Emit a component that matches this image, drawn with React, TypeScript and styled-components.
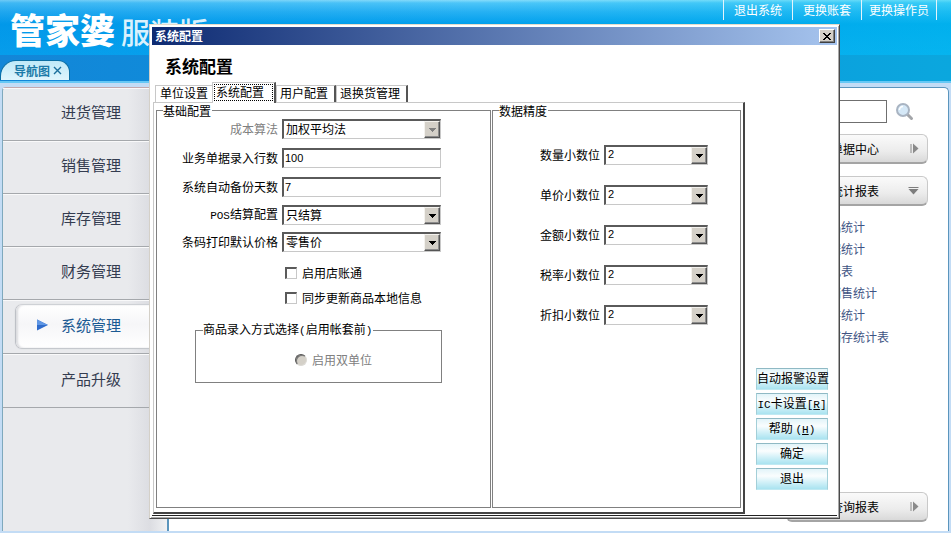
import React from "react";
import styled, { createGlobalStyle, css } from "styled-components";

const Global = createGlobalStyle`
  * { box-sizing: border-box; }
  html, body, #root { height: 100%; }
  body {
    margin: 0;
    overflow: hidden;
    font: 12px/16px "Noto Sans CJK SC", "Liberation Sans", sans-serif;
    color: #000;
  }
  button, input, select { font: inherit; color: inherit; margin: 0; }
`;

const Page = styled.div`
  position: relative;
  min-height: 100%;
  display: flex;
  flex-direction: column;
  background: #c3dcf5;
`;

/* ---------- header ---------- */

const Header = styled.header`
  display: flex;
  justify-content: space-between;
  height: 55px;
  padding: 0 14px 0 10px;
  background:
    linear-gradient(90deg, rgba(0, 120, 220, 0.18), rgba(0, 150, 235, 0) 50%, rgba(0, 215, 240, 0.3)),
    linear-gradient(180deg, #86dcfb 0, #4cc5f8 3px, #25b0f3 12px, #019fec 24px, #08a5ee 55px);
`;

const Brand = styled.div`
  display: flex;
  align-items: flex-start;
  gap: 6px;
  padding-top: 5px;
  color: #fff;
  white-space: nowrap;
`;

const BrandName = styled.span`
  font-size: 35px;
  font-weight: 900;
  line-height: 48px;
`;

const BrandEdition = styled.span`
  font-size: 29px;
  font-weight: 500;
  line-height: 52px;
  color: #d9f1fd;
`;

const SystemMenu = styled.nav`
  display: flex;
  align-items: flex-start;
  border-right: 1px solid #e6f4fb;
  height: 20px;
`;

const SystemButton = styled.button<{ $tight?: boolean }>`
  height: 20px;
  padding: 0 ${(p) => (p.$tight ? 7 : 10)}px;
  border: 0;
  border-left: 1px solid #e6f4fb;
  background: none;
  color: #fff;
  line-height: 20px;
`;

const TabStrip = styled.div`
  display: flex;
  align-items: flex-end;
  height: 28px;
  padding-bottom: 1px;
  border-bottom: 2px solid #66c8f5;
  background: linear-gradient(90deg, #1386d8, #0b93dc 50%, #0ba7de);
`;

const PageTab = styled.button`
  height: 20px;
  width: 70px;
  padding: 0 0 0 13px;
  border: 1px solid #0b6fa5;
  border-bottom: 0;
  border-radius: 16px 12px 0 0;
  background: linear-gradient(180deg, #bfe9f8, #dff5fd);
  color: #1b7aa8;
  font-weight: 700;
  line-height: 18px;
  display: flex;
  align-items: center;
  gap: 3px;
`;

/* ---------- body ---------- */

const Body = styled.div`
  flex: 1;
  display: grid;
  grid-template-columns: 165px minmax(0, 1fr);
  margin: 4px 2px 2px;
`;

const Sidebar = styled.nav`
  border: 1px solid #c3a9ae;
  border-width: 1px 0 0 1px;
  border-left-color: #7fa9bd;
  border-radius: 4px 0 0 0;
  background: linear-gradient(90deg, #e9eaed 125px, #dcdde2 147px, #f0f1f3);
`;

const NavItem = styled.button<{ $tall?: boolean; $active?: boolean }>`
  display: flex;
  align-items: center;
  width: 100%;
  height: ${(p) => (p.$tall ? 54 : 53)}px;
  padding: 0;
  border: 0;
  border-bottom: 1px solid #a5a8ac;
  box-shadow: inset 0 1px #f9f9fa;
  background: none;
  font-size: 15px;
  color: ${(p) => (p.$active ? "#1b5a93" : "#343c50")};
`;

const NavFace = styled.span<{ $active?: boolean }>`
  display: grid;
  grid-template-columns: 45px 1fr;
  align-items: center;
  flex: 1;
  height: 43px;
  margin-left: 13px;
  padding-bottom: 4px;
  text-align: left;
  ${(p) =>
    p.$active &&
    css`
      border-radius: 6px 0 0 6px;
      background: linear-gradient(180deg, #fff 0, #f6f6f8 45%, #fff 100%);
      box-shadow: -1px 0 1px #b9bcc2, 0 1px 1px #c4c6cb, 0 -1px 1px #cfd1d5, inset 2px 0 2px #dcdde0;
    `}
`;

const NavArrow = styled.svg`
  justify-self: end;
  margin-right: 13px;
`;

const Content = styled.main`
  display: flex;
  flex-direction: column;
  align-items: flex-end;
  padding: 12px 20px 9px;
  border: 1px solid #5b95bd;
  border-width: 1px 1px 0 2px;
  border-radius: 0 5px 0 0;
  background: #fff;
`;

const Search = styled.form`
  display: flex;
  align-items: center;
  gap: 8px;
  width: 170px;
  margin-bottom: 11px;
  padding-right: 13px;
`;

const SearchInput = styled.input`
  flex: 1;
  min-width: 0;
  height: 23px;
  border: 1px solid #6f6f6f;
  background: #fff;
`;

const IconButton = styled.button`
  width: 20px;
  height: 20px;
  padding: 0;
  border: 0;
  background: none;
`;

const SectionButton = styled.button<{ $last?: boolean }>`
  display: flex;
  align-items: center;
  justify-content: space-between;
  width: 142px;
  height: 30px;
  margin-top: ${(p) => (p.$last ? "auto" : "0")};
  margin-bottom: ${(p) => (p.$last ? "0" : "12px")};
  padding: 0 8px 0 44px;
  border: 1px solid #c9c9c9;
  border-bottom: 2px solid #a4a4a4;
  border-radius: 6px;
  background: linear-gradient(180deg, #fafafa, #ececec 60%, #d9d9d9);
`;

const ReportList = styled.ul`
  width: 142px;
  margin: 0;
  padding: 0 0 0 31px;
  list-style: none;
`;

const ReportItem = styled.li`
  height: 22px;
  line-height: 18px;
  white-space: nowrap;
`;

const ReportLink = styled.a`
  color: #3f5484;
  text-decoration: none;
`;

/* ---------- dialog ---------- */

const Dialog = styled.section`
  position: absolute;
  inset: 24px 111px 14px 149px;
  display: flex;
  flex-direction: column;
  padding: 2px;
  border: 1px solid;
  border-color: #e6dccb #4a4a4a #4a4a4a #d4d0c8;
  box-shadow: inset 1px 1px #fff, inset -1px -1px #a9a9a9;
  background: #fff;
`;

const TitleBar = styled.div`
  display: flex;
  align-items: center;
  justify-content: space-between;
  height: 18px;
  padding: 0 2px 0 3px;
  background: linear-gradient(90deg, #0d2a72, #a6c4ee);
  color: #fff;
  font-weight: 700;
`;

const CloseButton = styled.button`
  display: grid;
  place-items: center;
  width: 16px;
  height: 14px;
  padding: 0;
  border: 1px solid;
  border-color: #fff #404040 #404040 #fff;
  box-shadow: inset -1px -1px #808080;
  background: #d4d0c8;
`;

const DialogBody = styled.div`
  flex: 1;
  display: grid;
  grid-template-columns: minmax(0, 1fr) 72px;
  grid-template-rows: auto minmax(0, 1fr);
  column-gap: 11px;
  padding: 0 9px 1px 1px;
  border-bottom: 1px solid #222;
`;

const Heading = styled.h1`
  grid-column: 1 / -1;
  margin: 0;
  padding: 9px 0 4px 12px;
  font-size: 17px;
  font-weight: 700;
  line-height: 24px;
`;

const Tabbed = styled.div`
  display: flex;
  flex-direction: column;
`;

const Tabs = styled.div`
  display: flex;
  align-items: flex-end;
  height: 20px;
  padding-left: 2px;
`;

const Tab = styled.button<{ $selected?: boolean; $first?: boolean }>`
  height: 17px;
  padding: ${(p) => (p.$first ? "0 4px 3px" : "0 6px 3px 3px")};
  border: 1px solid #c8c8c8;
  border-bottom: 0;
  border-right: ${(p) => (p.$first ? "0" : "2px solid #555")};
  background: #fff;
  line-height: 13px;
  ${(p) =>
    p.$selected &&
    css`
      z-index: 1;
      height: 21px;
      margin-bottom: -1px;
      padding: 0 1px 2px;
    `}
`;

const TabFocus = styled.span`
  display: block;
  padding: 0 8px 2px 1px;
  border: 1px dotted #000;
  line-height: 13px;
`;

const TabPanel = styled.div`
  flex: 1;
  display: grid;
  grid-template-columns: minmax(0, 335fr) minmax(0, 249fr);
  gap: 1px;
  padding: 1px 2px 4px;
  border: 1px solid #c8c8c8;
  border-right: 2px solid #444;
  border-bottom: 2px solid #444;
`;

const Group = styled.fieldset<{ $top: number }>`
  min-width: 0;
  margin: 0;
  padding: ${(p) => p.$top}px 6px 0;
  border: 1px solid #808080;
`;

const Legend = styled.legend`
  padding: 0 1px 0 0;
  line-height: 13px;
  white-space: nowrap;
`;

const Row = styled.div<{ $gap: number }>`
  display: grid;
  grid-template-columns: 115px 159px;
  align-items: center;
  column-gap: 4px;
  margin-bottom: ${(p) => p.$gap}px;
`;

const PrecisionRow = styled(Row)`
  grid-template-columns: 101px 104px;
`;

const Label = styled.label<{ $disabled?: boolean }>`
  text-align: right;
  white-space: nowrap;
  color: ${(p) => (p.$disabled ? "#808080" : "#000")};
`;

const sunken = css`
  border: 1px solid;
  border-width: 2px 1px 1px 2px;
  border-color: #5a5a5a #c8c8c8 #c8c8c8 #5a5a5a;
  background: #fff;
`;

const TextInput = styled.input`
  ${sunken}
  width: 100%;
  height: 20px;
  padding: 0 1px 2px;
  font-family: "Liberation Sans", sans-serif;
  font-size: 11px;
  line-height: 15px;
`;

const Combo = styled.div`
  ${sunken}
  display: grid;
  grid-template-columns: minmax(0, 1fr) 16px;
  height: 20px;
`;

const Select = styled.select<{ $number?: boolean }>`
  grid-area: 1 / 1 / 2 / 3;
  appearance: none;
  height: 15px;
  padding: 0 18px 0 2px;
  border: 0;
  background: none;
  color: #000;
  opacity: 1;
  line-height: 15px;
  ${(p) =>
    p.$number &&
    css`
      font-family: "Liberation Sans", sans-serif;
      font-size: 11px;
    `}
`;

const ComboArrow = styled.span`
  grid-area: 1 / 2;
  display: grid;
  place-items: center;
  height: 17px;
  border: 1px solid;
  border-color: #f4f2ee #555 #555 #f4f2ee;
  box-shadow: inset -1px -1px #8c8c8c;
  background: #d4d0c8;
  pointer-events: none;
`;

const Choice = styled.label<{ $indent: number; $gap: number; $disabled?: boolean }>`
  display: flex;
  align-items: center;
  gap: 5px;
  height: 16px;
  margin: ${(p) => p.$gap}px 0 0 ${(p) => p.$indent}px;
  color: ${(p) => (p.$disabled ? "#808080" : "#000")};
`;

const CheckBox = styled.input`
  appearance: none;
  width: 12px;
  height: 12px;
  ${sunken}
`;

const Radio = styled.input`
  appearance: none;
  width: 12px;
  height: 12px;
  border: 1px solid;
  border-color: #555 #dcdad5 #dcdad5 #555;
  border-radius: 50%;
  box-shadow: inset 1px 1px #777;
  background: #d4d0c8;
`;

const NestedGroup = styled(Group)`
  width: 247px;
  margin: 16px 0 0 32px;
  padding: 14px 7px 14px;
`;

const Actions = styled.div`
  display: flex;
  flex-direction: column;
  justify-content: flex-end;
  gap: 3px;
  padding-bottom: 24px;
`;

const ActionButton = styled.button`
  height: 22px;
  padding: 0 0 2px;
  border: 1px solid #a3cfd8;
  border-top-color: #8fb9c4;
  border-bottom-color: #bfe9f2;
  background: linear-gradient(180deg, #e2f4f9 0, #fafdfe 35%, #d3f1f8 65%, #a9e3f0);
  line-height: 18px;
  white-space: nowrap;
`;

const Latin = styled.span`
  font-family: "Liberation Mono", monospace;
  font-size: 11px;
`;

/* ---------- parts ---------- */

const navItems = ["进货管理", "销售管理", "库存管理", "财务管理", "系统管理", "产品升级"];
const reports = ["商品统计", "单据统计", "状况表", "商销售统计", "库存统计", "进销存统计表"];
const precisions = ["数量小数位", "单价小数位", "金额小数位", "税率小数位", "折扣小数位"];

function ComboBox(props: { id: string; value: string; disabled?: boolean; number?: boolean }) {
  return (
    <Combo>
      <Select id={props.id} disabled={props.disabled} $number={props.number} defaultValue={props.value}>
        <option>{props.value}</option>
      </Select>
      <ComboArrow>
        <svg width="7" height="4" viewBox="0 0 7 4" shapeRendering="crispEdges" aria-hidden="true">
          <path d="M0 0h7v1H6v1H5v1H4v1H3V3H2V2H1V1H0z" fill={props.disabled ? "#808080" : "#000"} />
        </svg>
      </ComboArrow>
    </Combo>
  );
}

function SideArrow() {
  return (
    <svg width="9" height="11" viewBox="0 0 9 11" aria-hidden="true">
      <path d="M1 1v9" stroke="#8a8a8a" />
      <path d="M3 0.5v10L8.5 5.5z" fill="#8a8a8a" />
    </svg>
  );
}

function DownArrow() {
  return (
    <svg width="11" height="9" viewBox="0 0 11 9" aria-hidden="true">
      <path d="M0.5 1.5h10" stroke="#7d7d7d" />
      <path d="M0.5 3h10L5.5 8.5z" fill="#7d7d7d" />
    </svg>
  );
}

function Magnifier() {
  return (
    <svg width="20" height="20" viewBox="0 0 20 20" aria-hidden="true">
      <path d="M12 12l4.5 4.5" stroke="#a3a5a9" strokeWidth="3" strokeLinecap="round" />
      <circle cx="8" cy="8" r="6" fill="#d5e8f7" stroke="#a9b4c2" strokeWidth="2" />
      <path d="M4.5 8a3.5 3.5 0 0 1 3.5-3.5" fill="none" stroke="#fff" strokeWidth="1.5" />
    </svg>
  );
}

export default function App() {
  return (
    <Page>
      <Global />
      <Header>
        <Brand>
          <BrandName>管家婆</BrandName>
          <BrandEdition>服装版</BrandEdition>
        </Brand>
        <SystemMenu>
          <SystemButton>退出系统</SystemButton>
          <SystemButton>更换账套</SystemButton>
          <SystemButton $tight>更换操作员</SystemButton>
        </SystemMenu>
      </Header>
      <TabStrip>
        <PageTab>
          导航图
          <svg width="9" height="9" viewBox="0 0 9 9" aria-hidden="true">
            <path d="M1 1l7 7M8 1L1 8" stroke="#1b6f9c" strokeWidth="1.4" />
          </svg>
        </PageTab>
      </TabStrip>

      <Body>
        <Sidebar>
          {navItems.map((name, i) => {
            const active = i === 4;
            return (
              <NavItem key={name} $tall={i >= 4} $active={active}>
                <NavFace $active={active}>
                  {active ? (
                    <NavArrow width="11" height="12" viewBox="0 0 11 12" aria-hidden="true">
                      <path d="M0 0.5v11L11 6z" fill="#2f6bcb" />
                      <path d="M0 0.5v5.5h11z" fill="#5f96e4" />
                    </NavArrow>
                  ) : (
                    <span />
                  )}
                  {name}
                </NavFace>
              </NavItem>
            );
          })}
        </Sidebar>
        <Content>
          <Search>
            <SearchInput aria-label="搜索" />
            <IconButton type="button" aria-label="搜索">
              <Magnifier />
            </IconButton>
          </Search>
          <SectionButton>
            单据中心
            <SideArrow />
          </SectionButton>
          <SectionButton>
            统计报表
            <DownArrow />
          </SectionButton>
          <ReportList>
            {reports.map((name) => (
              <ReportItem key={name}>
                <ReportLink href="#">{name}</ReportLink>
              </ReportItem>
            ))}
          </ReportList>
          <SectionButton $last>
            查询报表
            <SideArrow />
          </SectionButton>
        </Content>
      </Body>

      <Dialog role="dialog" aria-labelledby="dialog-title">
        <TitleBar>
          <span id="dialog-title">系统配置</span>
          <CloseButton aria-label="关闭">
            <svg width="8" height="7" viewBox="0 0 8 7" shapeRendering="crispEdges" aria-hidden="true">
              <path
                d="M0 0h2v1h1v1h2V1h1V0h2v1H7v1H6v1H5v1h1v1h1v1h1v1H6V6H5V5H3v1H2v1H0V6h1V5h1V4h1V3H2V2H1V1H0z"
                fill="#000"
              />
            </svg>
          </CloseButton>
        </TitleBar>
        <DialogBody>
          <Heading>系统配置</Heading>
          <Tabbed>
            <Tabs role="tablist">
              <Tab role="tab" $first>
                单位设置
              </Tab>
              <Tab role="tab" aria-selected="true" $selected>
                <TabFocus>系统配置</TabFocus>
              </Tab>
              <Tab role="tab">用户配置</Tab>
              <Tab role="tab">退换货管理</Tab>
            </Tabs>
            <TabPanel role="tabpanel">
              <Group $top={2}>
                <Legend>基础配置</Legend>
                <Row $gap={9}>
                  <Label htmlFor="cost" $disabled>
                    成本算法
                  </Label>
                  <ComboBox id="cost" value="加权平均法" disabled />
                </Row>
                <Row $gap={9}>
                  <Label htmlFor="lines">业务单据录入行数</Label>
                  <TextInput id="lines" defaultValue="100" />
                </Row>
                <Row $gap={8}>
                  <Label htmlFor="backup">系统自动备份天数</Label>
                  <TextInput id="backup" defaultValue="7" />
                </Row>
                <Row $gap={7}>
                  <Label htmlFor="pos">
                    <Latin>POS</Latin>结算配置
                  </Label>
                  <ComboBox id="pos" value="只结算" />
                </Row>
                <Row $gap={0}>
                  <Label htmlFor="barcode">条码打印默认价格</Label>
                  <ComboBox id="barcode" value="零售价" />
                </Row>
                <Choice $indent={122} $gap={13}>
                  <CheckBox type="checkbox" />
                  启用店账通
                </Choice>
                <Choice $indent={122} $gap={9}>
                  <CheckBox type="checkbox" />
                  同步更新商品本地信息
                </Choice>
                <NestedGroup $top={14}>
                  <Legend>
                    商品录入方式选择<Latin>(</Latin>启用帐套前<Latin>)</Latin>
                  </Legend>
                  <Choice $indent={92} $gap={0} $disabled>
                    <Radio type="radio" disabled />
                    启用双单位
                  </Choice>
                </NestedGroup>
              </Group>
              <Group $top={28}>
                <Legend>数据精度</Legend>
                {precisions.map((name, i) => (
                  <PrecisionRow key={name} $gap={20}>
                    <Label htmlFor={`precision-${i}`}>{name}</Label>
                    <ComboBox id={`precision-${i}`} value="2" number />
                  </PrecisionRow>
                ))}
              </Group>
            </TabPanel>
          </Tabbed>
          <Actions>
            <ActionButton>自动报警设置</ActionButton>
            <ActionButton>
              <Latin>IC</Latin>卡设置
              <Latin>
                [<u>R</u>]
              </Latin>
            </ActionButton>
            <ActionButton>
              帮助{" "}
              <Latin>
                (<u>H</u>)
              </Latin>
            </ActionButton>
            <ActionButton>确定</ActionButton>
            <ActionButton>退出</ActionButton>
          </Actions>
        </DialogBody>
      </Dialog>
    </Page>
  );
}
